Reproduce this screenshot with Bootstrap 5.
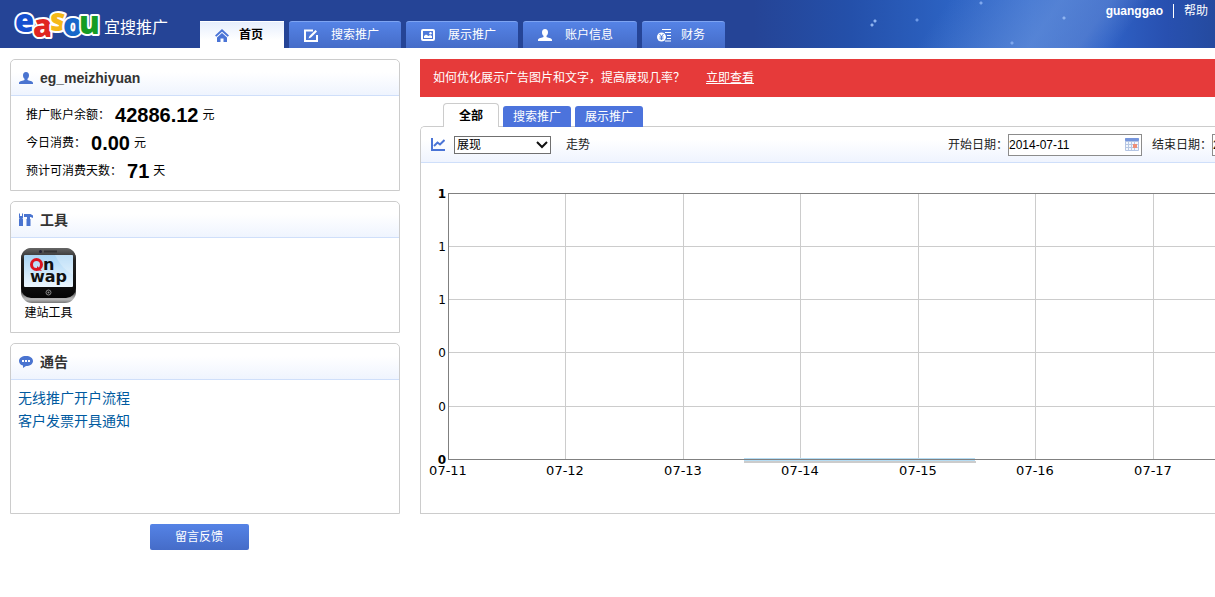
<!DOCTYPE html>
<html lang="zh-CN">
<head>
<meta charset="utf-8">
<meta name="viewport" content="width=device-width, initial-scale=1">
<title>宜搜推广</title>
<link href="https://cdn.jsdelivr.net/npm/bootstrap@5.3.0/dist/css/bootstrap.min.css" rel="stylesheet">
<style>
body{font:12px/18px "Liberation Sans","Noto Sans CJK SC",sans-serif;color:#000;background:#fff}
.site-head{height:48px;background:
 radial-gradient(circle at 872px 25px,#8fb4f0 0 1px,transparent 2px),
 radial-gradient(circle at 875px 21px,#8fb4f0 0 1px,transparent 2px),
 radial-gradient(circle at 917px 20px,#6f9be8 0 1px,transparent 2px),
 radial-gradient(circle at 981px 3px,#7fa8ee 0 1px,transparent 2px),
 radial-gradient(circle at 1012px 43px,#7fa8ee 0 1px,transparent 2px),
 radial-gradient(circle at 1064px 18px,#8fb4f0 0 1px,transparent 2px),
 linear-gradient(125deg,transparent 76%,rgba(110,150,220,.55) 85%,rgba(110,145,215,.45) 89%,transparent 92%),
 linear-gradient(90deg,#254496 62%,#2450aa 70%,#2c62c2 78%,#366dce 85%,#2f62c6 91%,#2850b0 96%,#264ea8 98%,#254a9f)}
.logo-box{width:200px}
.wordmark{font:800 31px "Open Sans","Liberation Sans",sans-serif;stroke:#fff;stroke-width:4px;stroke-linejoin:round;paint-order:stroke}
.main-nav{gap:5px}
.head-tab{height:27px;padding:0 22px 0 15px;gap:13px;color:#fff;text-decoration:none;white-space:nowrap;border-radius:3px 3px 0 0;border-top:1px solid #7ea4f2;background:linear-gradient(#5583e6,#456cc8)}
.head-tab.wide{padding-right:24px}
.head-tab.short{gap:10px;padding-right:20px}
.head-tab.active{color:#000;border-top-color:#fff;background:linear-gradient(#e6eefd,#fff 70%);font-weight:bold;border-radius:0;padding-right:21px}
.user-links a{color:#fff;text-decoration:none}
.user-links{padding:2px 7px 0 0;gap:10px}
.user-links .bar{width:1px;height:14px;background:#fff}
.page-body{padding:11px 0 0 10px;gap:20px}
.side{width:390px;gap:10px}
.panel{border:1px solid #ccc;border-radius:5px 5px 0 0;background:#fff}
.side .panel{border-radius:5px 5px 0 0}
.panel-head{height:36px;padding-left:8px;gap:7px;border-bottom:1px solid #cfdffa;border-radius:5px 5px 0 0;background:linear-gradient(#fff 35%,#eff4fe)}
.panel-head h2{font-size:14px;line-height:20px;font-weight:bold;color:#333}
.money{padding:5px 15px}
.money dt{font-weight:normal}
.money div{height:28px}
.money b{font-size:20px;margin:0 4px 0 5px}
.tools{height:94px;padding:10px}
.tools a{color:#000;text-decoration:none;line-height:20px}
.notices{height:133px;padding:7px}
.notices a{font-size:14px;line-height:23px;color:#005aa0;text-decoration:none}
.btn-feedback{width:99px;height:26px;margin-right:12px;padding:0;font-size:12px;line-height:26px;color:#fff;border:0;border-radius:2px;background:linear-gradient(#5583e6,#456cc8)}
.tip{height:38px;padding:0 13px;gap:21px;background:#e63a3a;color:#fff;white-space:nowrap}
.chart-tabs{padding:6px 0 0 23px;gap:4px;margin-bottom:-1px}
.chart-tabs button{height:21px;padding:0 10px;border:0;border-radius:3px 3px 0 0;background:#4c73dc;color:#fff}
.chart-tabs .active{height:24px;padding:0 15px;border:1px solid #ccc;border-bottom:0;border-radius:4px 4px 0 0;background:#fff;color:#000;font-weight:bold}
.chart-panel{border-right:0;border-top-right-radius:0}
.toolbar{height:36px;min-width:935px;padding:0 10px;border-bottom:1px solid #cfdffa;background:linear-gradient(#fff 35%,#eff4fe);color:#222;white-space:nowrap}
.toolbar .form-select{width:97px;height:18px;padding:0 20px 0 2px;margin:0 15px 0 9px;border:1px solid #707070;border-radius:0;font-size:12px;line-height:16px;color:#000;background:#fff url("data:image/svg+xml,%3Csvg xmlns='http://www.w3.org/2000/svg' viewBox='0 0 12 8'%3E%3Cpath d='M1 1l5 5 5-5' fill='none' stroke='%23111' stroke-width='2'/%3E%3C/svg%3E") no-repeat right 2px center/12px 8px}
.dates{gap:10px}
.date-box{width:134px;height:22px;padding-right:2px;border:1px solid #8c8c8c;background:#fff}
.date-box input{border:0;padding:0;width:100%;min-width:0;color:#000;background:none}
.plot{display:block;font-family:"DejaVu Sans",sans-serif;font-size:13px}
.plot .scale{font-size:12px}
</style>
</head>
<body>
<svg width="0" height="0" class="d-none">
 <symbol id="person" viewBox="0 0 14 12"><path d="M7 0c2 0 3 1.300 3 3.200C10 5 9.300 6 8.500 6.800V8c1 .8 5.500.8 5.500 3v1H0v-1c0-2.200 4.500-2.200 5.500-3V6.800C4.700 6 4 5 4 3.200 4 1.300 5 0 7 0z" fill="currentColor"/></symbol>
 <symbol id="cal" viewBox="0 0 14 13"><rect width="14" height="13" rx="1" fill="#b4c5e4"/><rect width="14" height="3" rx="1" fill="#7595dc"/><path d="M1 4h12v8H1z" fill="#f4f7fc"/><path d="M1 6.500h12M1 9.500h12M3.500 4v8M6.500 4v8M9.500 4v8" stroke="#b7c8e3"/><path d="M8 6h4v4H8z" fill="#ef8f78"/></symbol>
</svg>
<header class="site-head d-flex align-items-end overflow-hidden">
 <div class="logo-box flex-shrink-0">
  <svg class="d-block" width="200" height="48" role="img" aria-label="easou 宜搜推广">
   <text class="wordmark"><tspan x="15" y="32" fill="#1650cf">e</tspan><tspan x="33" y="37" fill="#e02622">a</tspan><tspan x="50" y="31" fill="#f5b916">s</tspan><tspan x="63" y="36" fill="#1767c9">o</tspan><tspan x="79" y="34" fill="#169c24">u</tspan></text>
   <text x="104" y="33" font-family="Noto Sans CJK SC" font-size="16" fill="#fff">宜搜推广</text>
  </svg>
 </div>
 <nav class="main-nav d-flex flex-shrink-0 align-items-end">
  <a href="#" class="head-tab short active d-flex align-items-center"><svg width="14" height="13" viewBox="0 0 14 13" fill="#4a74d6"><path d="M7 0l7 6.500-1.300 1.300L7 2.700 1.300 7.800 0 6.500z"/><path d="M7 4l5 4.500V13H8.500V9.500h-3V13H2V8.500z"/></svg>首页</a>
  <a href="#" class="head-tab d-flex align-items-center"><svg width="14" height="13" viewBox="0 0 14 13" fill="none" stroke="#fff" stroke-width="2"><path d="M9 1.500H1V12h12V6"/><path d="M4.500 9.500l1-2.500L11.500 1l1.500 1.500L7 8.500z" fill="#fff" stroke="none"/></svg>搜索推广</a>
  <a href="#" class="head-tab d-flex align-items-center"><svg width="14" height="12" viewBox="0 0 14 12"><rect x="1" y="1" width="12" height="10" rx="1" fill="none" stroke="#fff" stroke-width="2"/><path d="M3 9V7l2-1.500L7.500 7 9 6l2 1v2z" fill="#fff"/><circle cx="9.500" cy="4.300" r="1.200" fill="#fff"/></svg>展示推广</a>
  <a href="#" class="head-tab wide d-flex align-items-center"><svg width="14" height="12"><use href="#person"/></svg>账户信息</a>
  <a href="#" class="head-tab short d-flex align-items-center"><svg width="14" height="13" viewBox="0 0 14 13"><path d="M5 .5h9M8 3.500h6M10 6.500h4M10 9.500h4M8 12h6" stroke="#fff"/><circle cx="4.500" cy="8" r="4.500" fill="#fff"/><path d="M2.500 5l2 2.500 2-2.500M4.500 7v4M2.500 8h4M2.500 9.800h4" fill="none" stroke="#4a74d6" stroke-width=".9"/></svg>财务</a>
 </nav>
 <div class="user-links d-flex align-items-center align-self-start ms-auto flex-shrink-0"><a href="#" class="fw-bold">guanggao</a><span class="bar"></span><a href="#">帮助</a></div>
</header>

<main class="page-body d-flex align-items-start overflow-hidden">
 <aside class="side d-flex flex-column flex-shrink-0">
  <section class="panel">
   <div class="panel-head d-flex align-items-center"><svg width="14" height="12" color="#4a74d0"><use href="#person"/></svg><h2 class="m-0">eg_meizhiyuan</h2></div>
   <dl class="money m-0">
    <div class="d-flex align-items-center"><dt>推广账户余额：</dt><dd class="m-0 d-flex align-items-center"><b>42886.12</b>元</dd></div>
    <div class="d-flex align-items-center"><dt>今日消费：</dt><dd class="m-0 d-flex align-items-center"><b>0.00</b>元</dd></div>
    <div class="d-flex align-items-center"><dt>预计可消费天数：</dt><dd class="m-0 d-flex align-items-center"><b>71</b>天</dd></div>
   </dl>
  </section>
  <section class="panel">
   <div class="panel-head d-flex align-items-center"><svg width="14" height="13" viewBox="0 0 14 13" fill="#4a74d0"><path d="M0 1l1-1v3h2V0l1 1v3.500L3.500 6H4v7H0V6h.5L0 4.500z"/><path d="M5 1h6.500L14 2.500V5l-2.500-1H11v2h.5v7h-4V6H8V4H5z"/></svg><h2 class="m-0">工具</h2></div>
   <div class="tools">
    <a href="#" class="d-inline-flex flex-column align-items-center">
     <svg width="55" height="55" viewBox="0 0 55 55" role="img" aria-label="Onwap">
      <defs><linearGradient id="metal" x2="0" y2="1"><stop offset=".8" stop-color="#555"/><stop offset=".93" stop-color="#bbb"/><stop offset="1" stop-color="#777"/></linearGradient><linearGradient id="glass" x2="0" y2="1"><stop stop-color="#666"/><stop offset=".25" stop-color="#222"/><stop offset="1" stop-color="#050505"/></linearGradient><linearGradient id="screen" x2="0" y2="1"><stop stop-color="#a9d5f5"/><stop offset="1" stop-color="#edf7ff"/></linearGradient></defs>
      <rect width="55" height="55" rx="11" fill="url(#metal)"/><rect width="55" height="50" rx="10" fill="url(#glass)"/>
      <circle cx="19.500" cy="3.500" r="1.500" fill="#223"/><path d="M23 3.500h13" stroke="#333" stroke-width="2"/>
      <rect x="3" y="7" width="49" height="32" rx="1" fill="url(#screen)"/><path d="M52 7v20Q40 20 34 7z" fill="#fff" opacity=".25"/>
      <circle cx="15.500" cy="16.500" r="5" fill="none" stroke="#dc1420" stroke-width="3"/><path d="M16 18l5 5-5-1z" fill="#dc1420"/>
      <g font-family="DejaVu Sans" font-weight="bold" fill="#111"><text x="22" y="22" font-size="16">n</text><text x="9" y="34" font-size="16">wap</text></g>
      <circle cx="27.500" cy="44.500" r="2.500" fill="none" stroke="#888"/><circle cx="27.500" cy="44.500" r="1" fill="#888"/>
     </svg>
     <span>建站工具</span>
    </a>
   </div>
  </section>
  <section class="panel">
   <div class="panel-head d-flex align-items-center"><svg width="14" height="12" viewBox="0 0 14 12"><path d="M7 0c4 0 7 2 7 5s-3 5-7 5l-3 2V9.600C1.600 9 0 7.200 0 5c0-3 3-5 7-5z" fill="#4a74d0"/><path d="M3 4h2v2H3zM6 4h2v2H6zM9 4h2v2H9z" fill="#fff"/></svg><h2 class="m-0">通告</h2></div>
   <ul class="notices list-unstyled m-0"><li class="d-flex"><a href="#">无线推广开户流程</a></li><li class="d-flex"><a href="#">客户发票开具通知</a></li></ul>
  </section>
  <button type="button" class="btn btn-feedback align-self-center">留言反馈</button>
 </aside>

 <div class="flex-grow-1 overflow-hidden">
  <div class="tip d-flex align-items-center"><span>如何优化展示广告图片和文字，提高展现几率？</span><a href="#" class="text-white">立即查看</a></div>
  <div class="chart-tabs d-flex align-items-end position-relative"><button type="button" class="active">全部</button><button type="button">搜索推广</button><button type="button">展示推广</button></div>
  <section class="panel chart-panel overflow-hidden">
   <div class="toolbar d-flex align-items-center">
    <svg width="14" height="13" viewBox="0 0 14 13" fill="none" stroke="#4a74d6" stroke-width="2"><path d="M1 0v12h13"/><path d="M3 8l3.500-3.500L9 6.500 13.500 2"/></svg>
    <select class="form-select" id="metric"><option>展现</option></select><label for="metric">走势</label>
    <div class="dates d-flex align-items-center ms-auto">
     <div class="d-flex align-items-center"><label for="from">开始日期：</label><div class="date-box d-flex align-items-center"><input id="from" type="text" value="2014-07-11"><svg class="flex-shrink-0" width="14" height="13"><use href="#cal"/></svg></div></div>
     <div class="d-flex align-items-center"><label for="to">结束日期：</label><div class="date-box d-flex align-items-center"><input id="to" type="text" value="2014-07-18"><svg class="flex-shrink-0" width="14" height="13"><use href="#cal"/></svg></div></div>
    </div>
   </div>
   <svg class="plot" width="100%" height="350" role="img" aria-label="走势">
    <g fill="#ccc"><rect x="27" y="83" width="100%" height="1"/><rect x="27" y="136" width="100%" height="1"/><rect x="27" y="189" width="100%" height="1"/><rect x="27" y="243" width="100%" height="1"/><rect x="144" y="30" width="1" height="266"/><rect x="262" y="30" width="1" height="266"/><rect x="379" y="30" width="1" height="266"/><rect x="497" y="30" width="1" height="266"/><rect x="614" y="30" width="1" height="266"/><rect x="732" y="30" width="1" height="266"/><rect x="323" y="298" width="232" height="2"/></g>
    <rect x="323" y="295" width="231" height="3" fill="#b5dcf3"/>
    <g fill="#808080"><rect x="27" y="30" width="100%" height="1"/><rect x="27" y="30" width="1" height="267"/><rect x="27" y="296" width="100%" height="1"/></g>
    <g class="scale" text-anchor="end"><text x="25" y="35" font-weight="bold">1</text><text x="25" y="88">1</text><text x="25" y="141">1</text><text x="25" y="194">0</text><text x="25" y="248">0</text><text x="25" y="301" font-weight="bold">0</text></g>
    <g text-anchor="middle"><text x="27" y="312">07-11</text><text x="144" y="312">07-12</text><text x="262" y="312">07-13</text><text x="379" y="312">07-14</text><text x="497" y="312">07-15</text><text x="614" y="312">07-16</text><text x="732" y="312">07-17</text></g>
   </svg>
  </section>
 </div>
</main>
<script src="https://cdn.jsdelivr.net/npm/bootstrap@5.3.0/dist/js/bootstrap.bundle.min.js"></script>
</body>
</html>
